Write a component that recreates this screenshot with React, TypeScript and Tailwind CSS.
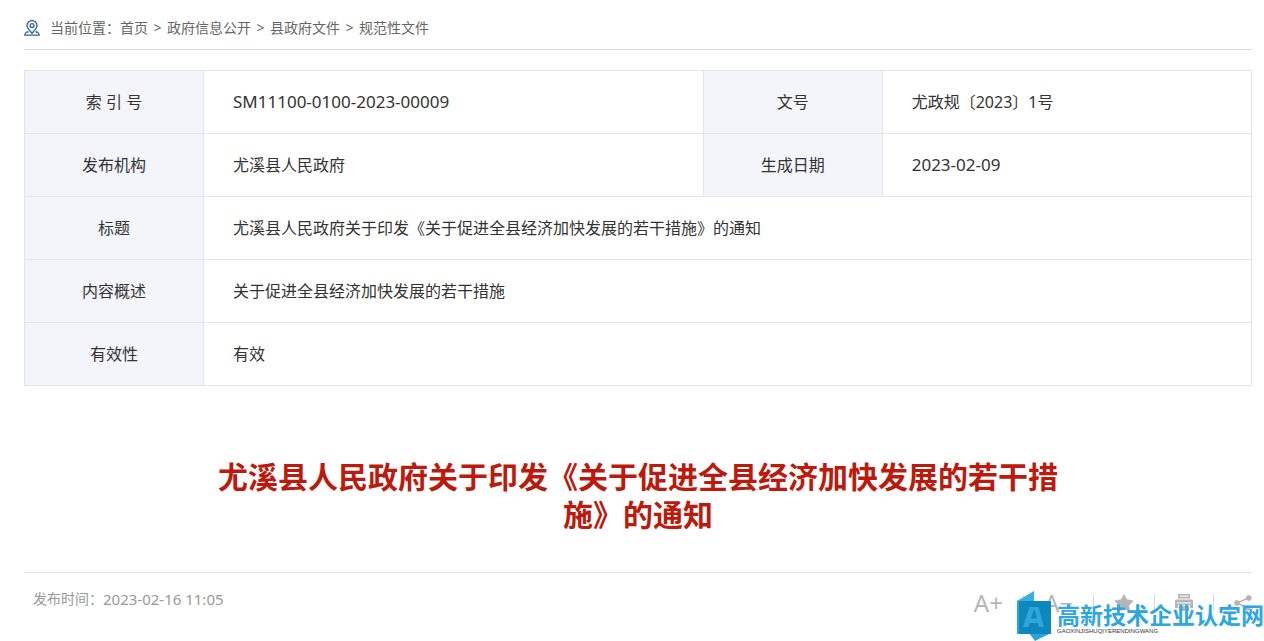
import type { ReactNode } from "react";

const crumbs = ["首页", "政府信息公开", "县政府文件", "规范性文件"];

function LabelCell({ children }: { children: ReactNode }) {
  return (
    <th scope="row" className="border border-[#e4e5e9] bg-[#f3f5fa] px-2 text-center font-normal">
      {children}
    </th>
  );
}

function ValueCell({ children, span, latin }: { children: ReactNode; span?: number; latin?: boolean }) {
  return (
    <td
      colSpan={span}
      className={latin ? "border border-[#e4e5e9] px-[29px] text-[17px]" : "border border-[#e4e5e9] px-[29px]"}
    >
      {children}
    </td>
  );
}

function LocationIcon() {
  return (
    <svg width="16" height="16" viewBox="0 0 16 16" fill="none" stroke="#2c6394" strokeWidth="1.300" aria-hidden="true">
      <path d="M8 13.200C5.600 10.600 3 8.400 3 5.600a5 5 0 0 1 10 0C13 8.400 10.400 10.600 8 13.200Z" />
      <circle cx="8" cy="5.500" r="1.900" />
      <path d="M4.600 12H2.800Q.8 12.800.8 15.200h14.400Q15.200 12.800 13.200 12H11.400" />
    </svg>
  );
}

function StarIcon() {
  return (
    <svg width="20" height="18" viewBox="0 0 20 18" fill="#b5b5b5" aria-hidden="true">
      <path d="M10 0l2.900 5.300 7.100 1.400-4.900 4.700 1.100 6.600-6.200-2.800-6.200 2.800 1.100-6.600L0 6.700l7.100-1.400Z" />
    </svg>
  );
}

function PrinterIcon() {
  return (
    <svg width="18" height="18" viewBox="0 0 18 18" fill="#b5b5b5" aria-hidden="true">
      <path d="M3 0h12v4.500H3Z" />
      <path d="M4.500 1.500h9v1.500h-9Z" fill="#e8e8e8" />
      <path d="M1.500 5.500h15A1.500 1.500 0 0 1 18 7V14h-3v-3H3v3H0V7A1.500 1.500 0 0 1 1.500 5.500Z" />
      <path d="M4 12h10v5H4Z" />
      <path d="M2 8.500h14v1H2Z" fill="#fff" />
    </svg>
  );
}

function ShareIcon() {
  return (
    <svg width="18" height="16" viewBox="0 0 18 16" fill="#b5b5b5" stroke="#b5b5b5" aria-hidden="true">
      <path d="M14.500 3L3 8l10.500 5" fill="none" strokeWidth="1.500" />
      <circle cx="14.800" cy="3" r="2.400" />
      <circle cx="3" cy="8" r="2.400" />
      <circle cx="13.800" cy="13" r="2.200" />
    </svg>
  );
}

function Divider() {
  return <span className="h-4 w-px bg-[#d8d8d8]" />;
}

function SiteMark() {
  return (
    <div className="pointer-events-none absolute right-0 bottom-0 flex items-end gap-1.5">
      <svg width="34" height="50" viewBox="0 0 34 50" aria-hidden="true">
        <path d="M0 10L17 0v12H0Z" fill="#35b0e4" />
        <path d="M12 42L18 50 34 42Z" fill="#27a5dc" />
        <path d="M0 10h34v33H0Z" fill="#0e87bd" />
        <path d="M0 10h2v33H0Z" fill="#27a5dc" />
        <path d="M6 36L12.500 16h9L27 36h-5.200l-1-4h-8l-1.400 4Zm8-8.500h5.800L18 19.500h-1.500Z" fill="#2fa5dc" />
      </svg>
      <div className="flex flex-col pb-1.5">
        <span className="text-[23px] leading-6 font-bold text-[#2ea7e0]">高新技术企业认定网</span>
        <span className="font-['Liberation_Sans',Arial,sans-serif] text-[6px] leading-2 text-[#333]">
          GAOXINJISHUQIYERENDINGWANG
        </span>
      </div>
    </div>
  );
}

export default function App() {
  return (
    <div className="relative bg-white font-['Noto_Sans','Noto_Sans_CJK_SC',sans-serif] text-[#333]">
      <main className="pr-3 pl-6">
        <nav
          aria-label="当前位置"
          className="flex items-center border-b border-[#d9d9d9] pt-4 pb-[9px] text-sm leading-6 text-[#666]"
        >
          <LocationIcon />
          <span className="ml-2.5">当前位置：</span>
          <ol className="flex">
            {crumbs.map((name, i) => (
              <li key={name} className="flex">
                {i > 0 && <span className="w-[19px] text-center">&gt;</span>}
                <a href="#">{name}</a>
              </li>
            ))}
          </ol>
        </nav>

        <table className="mt-5 w-full table-fixed border-collapse text-left text-base">
          <colgroup>
            <col className="w-[179px]" />
            <col />
            <col className="w-[179px]" />
            <col className="w-[30.1%]" />
          </colgroup>
          <tbody>
            <tr className="h-[63px]">
              <LabelCell>索 引 号</LabelCell>
              <ValueCell latin>SM11100-0100-2023-00009</ValueCell>
              <LabelCell>文号</LabelCell>
              <ValueCell>尤政规〔2023〕1号</ValueCell>
            </tr>
            <tr className="h-[63px]">
              <LabelCell>发布机构</LabelCell>
              <ValueCell>尤溪县人民政府</ValueCell>
              <LabelCell>生成日期</LabelCell>
              <ValueCell latin>2023-02-09</ValueCell>
            </tr>
            <tr className="h-[63px]">
              <LabelCell>标题</LabelCell>
              <ValueCell span={3}>尤溪县人民政府关于印发《关于促进全县经济加快发展的若干措施》的通知</ValueCell>
            </tr>
            <tr className="h-[63px]">
              <LabelCell>内容概述</LabelCell>
              <ValueCell span={3}>关于促进全县经济加快发展的若干措施</ValueCell>
            </tr>
            <tr className="h-[63px]">
              <LabelCell>有效性</LabelCell>
              <ValueCell span={3}>有效</ValueCell>
            </tr>
          </tbody>
        </table>

        <h1 className="mx-auto mt-[72px] max-w-[860px] text-center text-[30px] leading-[38px] font-bold text-[#bb1a0c]">
          尤溪县人民政府关于印发《关于促进全县经济加快发展的若干措施》的通知
        </h1>

        <div className="mt-[38px] flex items-start justify-between border-t border-[#e2e2e2] pt-3.5 pb-[26px] pl-[9px] text-[#999]">
          <p className="flex text-sm leading-6">
            发布时间：<time dateTime="2023-02-16T11:05" className="text-[15px] leading-6">2023-02-16 11:05</time>
          </p>
          <div className="flex items-center gap-5 pt-1 text-2xl leading-6 text-[#b5b5b5]">
            <button type="button" aria-label="放大字号">A+</button>
            <Divider />
            <button type="button" aria-label="缩小字号">A−</button>
            <Divider />
            <button type="button" aria-label="收藏"><StarIcon /></button>
            <Divider />
            <button type="button" aria-label="打印"><PrinterIcon /></button>
            <Divider />
            <button type="button" aria-label="分享"><ShareIcon /></button>
          </div>
        </div>
      </main>
      <SiteMark />
    </div>
  );
}
